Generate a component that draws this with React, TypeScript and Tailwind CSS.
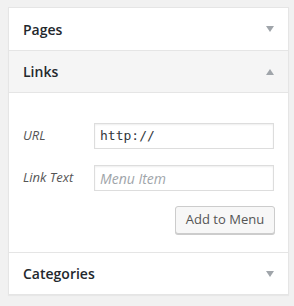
import React from "react";

const Down = () => (
  <svg width="8" height="6" viewBox="0 0 8 6" className="block">
    <polygon points="0,0 8,0 4,6" fill="#a0a5aa" />
  </svg>
);
const Up = () => (
  <svg width="8" height="6" viewBox="0 0 8 6" className="block">
    <polygon points="0,6 8,6 4,0" fill="#a0a5aa" />
  </svg>
);

export default function App() {
  const font = { fontFamily: '"Open Sans", "Noto Sans", sans-serif' };
  return (
    <div className="w-[294px] h-[306px] bg-[#f1f1f1] pt-[7px] pl-[8px] pr-[5px]" style={font}>
      <div className="bg-white border border-[#e5e5e5] shadow-[0_1px_1px_rgba(0,0,0,0.04)]">
        <div className="h-[43px] px-[14px] flex items-center justify-between border-b border-[#e5e5e5]">
          <span className="text-[14px] font-semibold text-[#23282d]">Pages</span>
          <Down />
        </div>
        <div className="h-[42px] px-[14px] flex items-center justify-between bg-[#f5f5f5] border-b border-[#e5e5e5]">
          <span className="text-[14px] font-semibold text-[#23282d]">Links</span>
          <Up />
        </div>
        <div className="h-[160px] pt-[30px] pl-[14px] pr-[13px] border-b border-[#e5e5e5]">
          <div className="flex items-center h-[26px]">
            <span className="w-[71px] text-[13px] italic text-[#555]">URL</span>
            <div className="w-[180px] h-[26px] border border-[#ddd] flex items-center px-[5px] shadow-[inset_0_1px_2px_rgba(0,0,0,0.07)]">
              <span className="text-[13px] text-[#32373c]" style={{ fontFamily: '"DejaVu Sans Mono", monospace' }}>http://</span>
            </div>
          </div>
          <div className="flex items-center h-[26px] mt-[16px]">
            <span className="w-[71px] text-[13px] italic text-[#555]">Link Text</span>
            <div className="w-[180px] h-[26px] border border-[#ddd] flex items-center px-[5px] shadow-[inset_0_1px_2px_rgba(0,0,0,0.07)]">
              <span className="text-[14px] italic text-[#a0a5aa]">Menu Item</span>
            </div>
          </div>
          <div className="flex justify-end mt-[15px]">
            <div className="h-[28px] w-[100px] flex items-center justify-center border border-[#ccc] rounded-[3px] bg-[#f7f7f7] shadow-[0_1px_0_#ccc] text-[13px] text-[#555]">
              Add to Menu
            </div>
          </div>
        </div>
        <div className="h-[41px] px-[14px] flex items-center justify-between">
          <span className="text-[14px] font-semibold text-[#23282d]">Categories</span>
          <Down />
        </div>
      </div>
    </div>
  );
}
